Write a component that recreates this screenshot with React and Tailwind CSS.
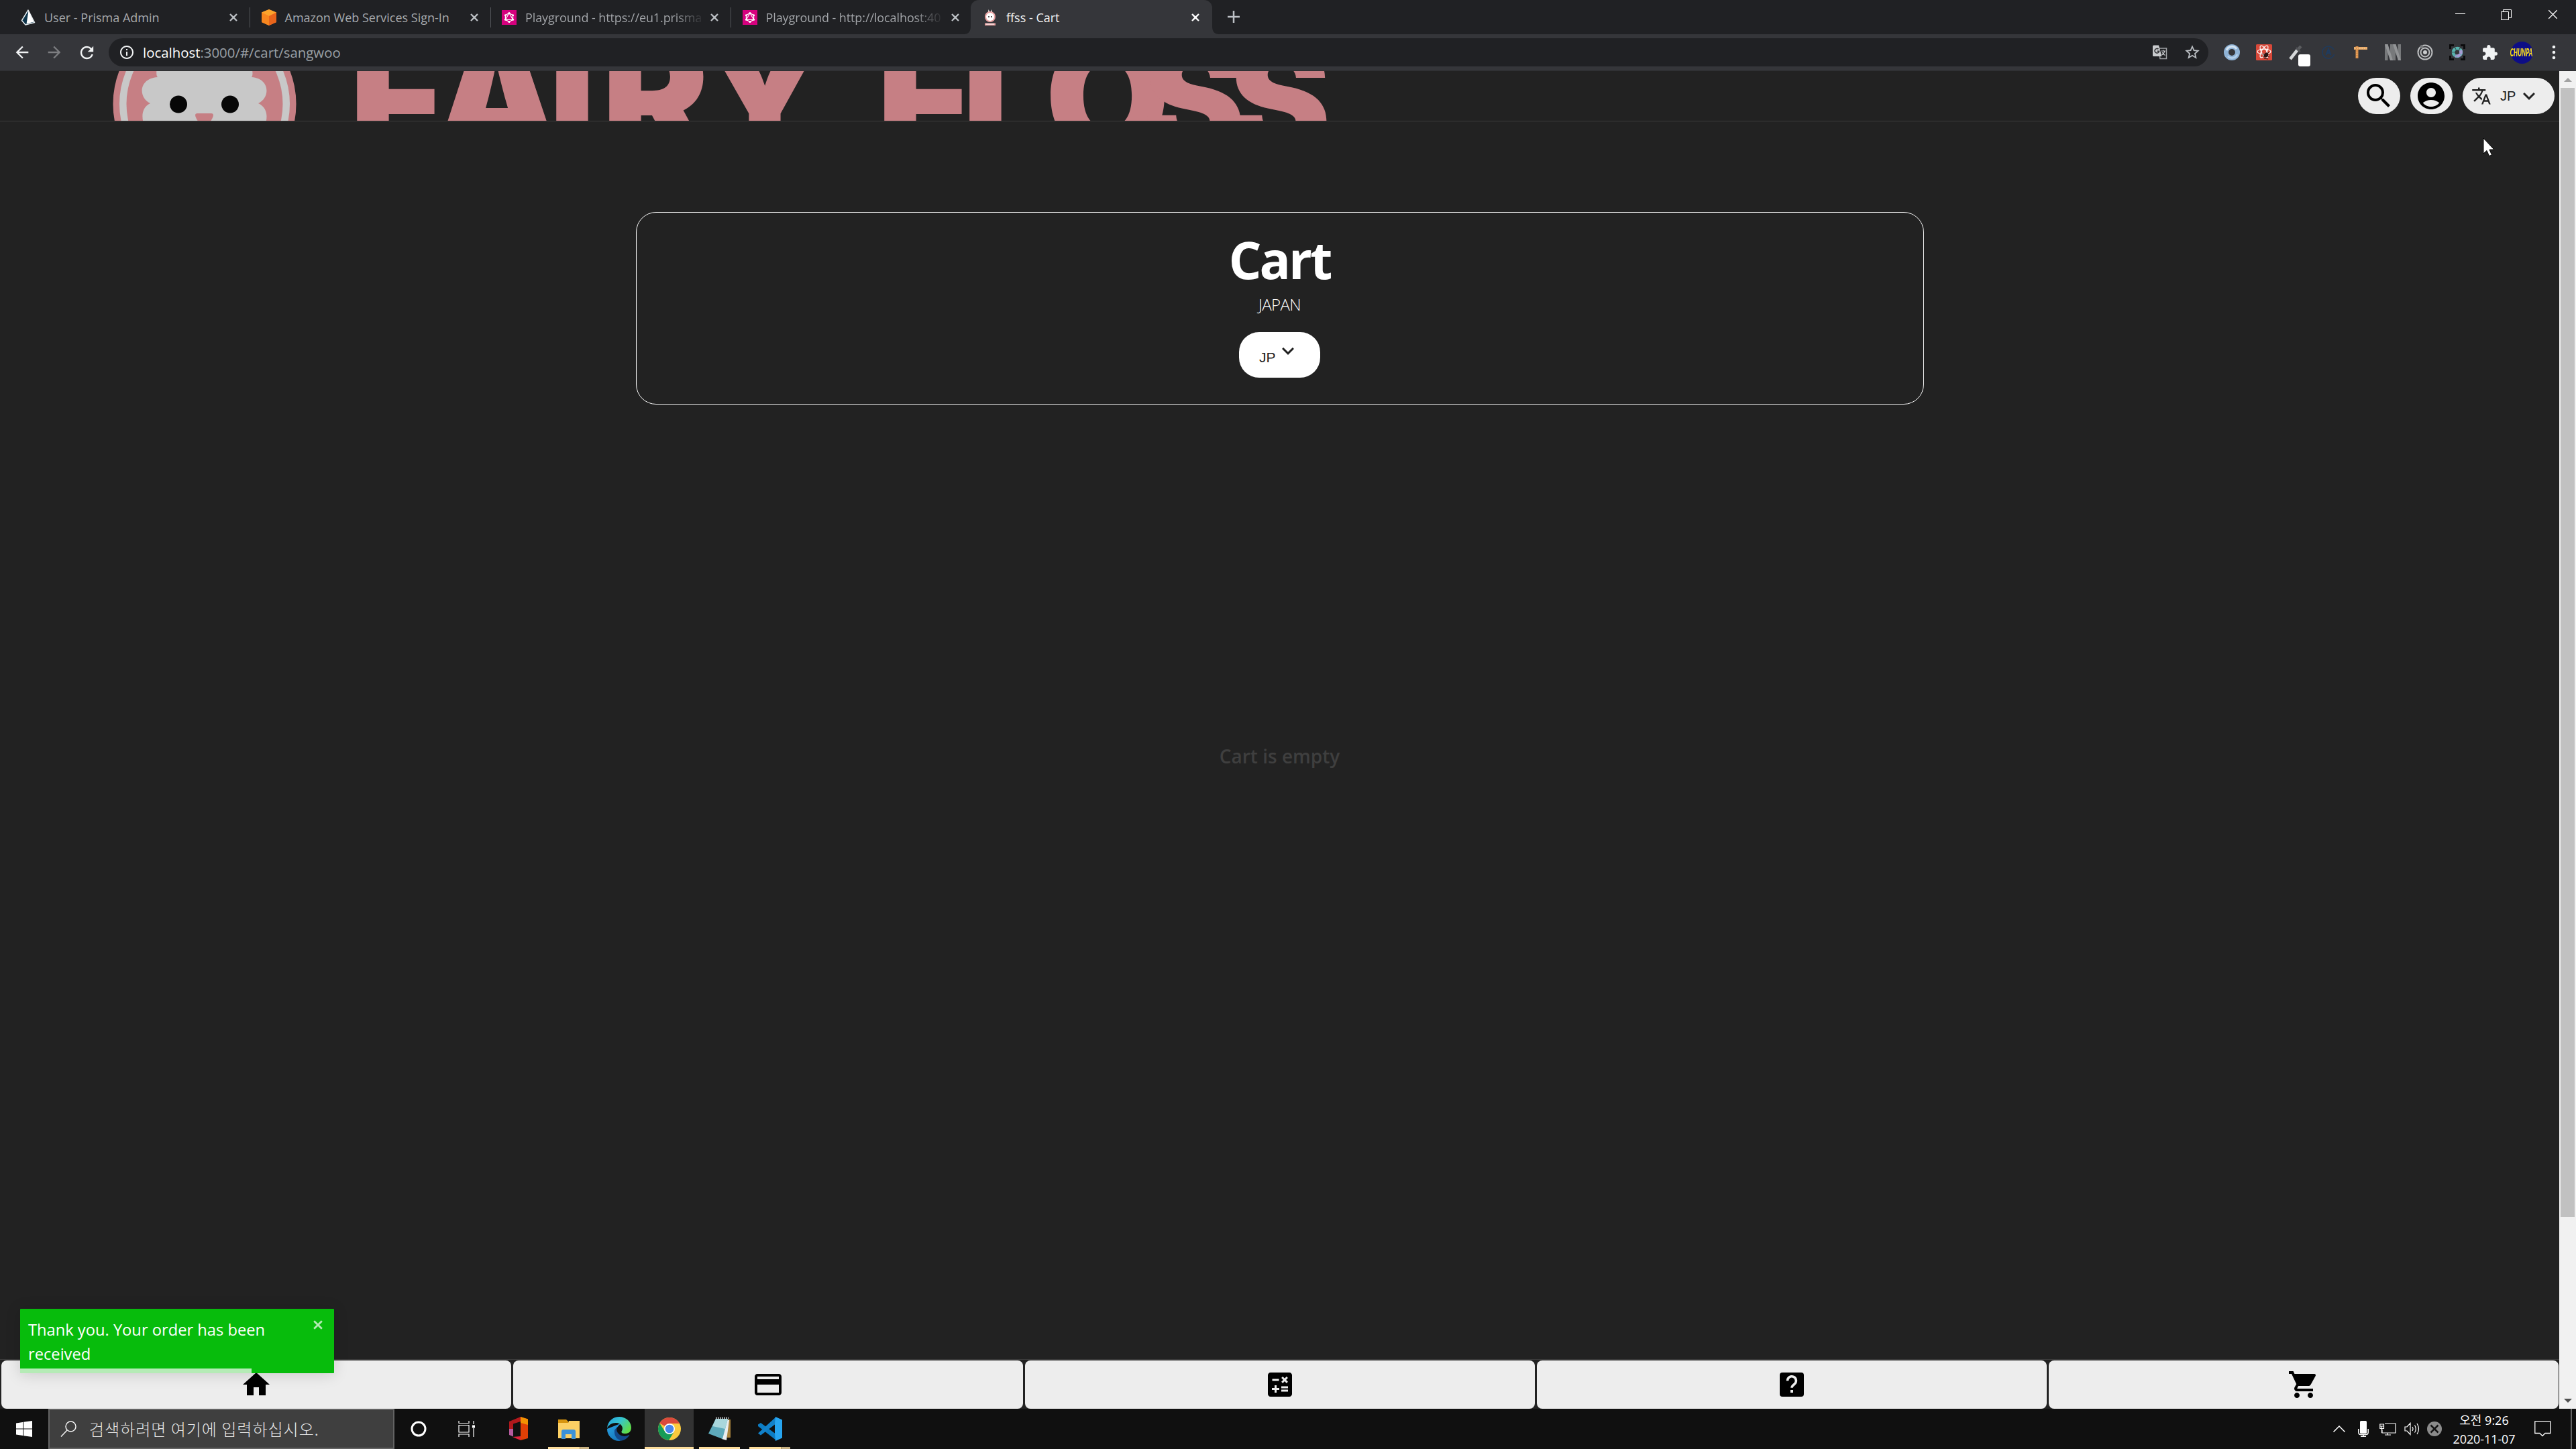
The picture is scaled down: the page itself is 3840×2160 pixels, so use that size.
import React from "react";
import {
  MdSearch, MdAccountCircle, MdTranslate, MdKeyboardArrowDown, MdHome, MdCreditCard, MdShoppingCart,
  MdArrowBack, MdArrowForward, MdRefresh, MdInfoOutline, MdStarBorder, MdExtension,
} from "react-icons/md";

const UI = "font-['Open_Sans','Noto_Sans_CJK_KR',sans-serif]";

function Close({ size = 12, className = "", w = 2.4 }) {
  return (
    <svg width={size} height={size} viewBox="0 0 12 12" className={className} stroke="currentColor" strokeWidth={w} fill="none">
      <path d="M1 1L11 11M11 1L1 11" />
    </svg>
  );
}

function PrismaIcon() {
  return (
    <svg width="22" height="24" viewBox="0 0 22 24">
      <path d="M11 1L1.500 16.500L7 23L20.500 19.500Z" fill="#0c344b" stroke="#dfe6ea" strokeWidth="1.500" strokeLinejoin="round" />
      <path d="M11.500 2L8.500 21.500L19.500 18.500Z" fill="#fff" />
    </svg>
  );
}
function AwsIcon() {
  return (
    <svg width="24" height="24" viewBox="0 0 24 24">
      <path d="M12 0L23 4.500V19L12 24L1 19V4.500Z" fill="#f58536" />
      <path d="M12 0L23 4.500L12 10L1 4.500Z" fill="#fba42c" />
      <path d="M12 10L23 4.500V19L12 24Z" fill="#e8641b" />
      <path d="M12 10L1 4.500V19L12 24Z" fill="#f7861f" />
    </svg>
  );
}
function PlaygroundIcon() {
  return (
    <svg width="22" height="22" viewBox="0 0 22 22">
      <rect width="22" height="22" fill="#d6017e" />
      <g fill="none" stroke="#fff" strokeWidth="1.200">
        <path d="M11 4.500L16.600 7.700V14.300L11 17.500L5.400 14.300V7.700Z" />
        <path d="M11 4.500L16.600 14.300H5.400Z" />
      </g>
      <g fill="#fff">
        <circle cx="11" cy="4.500" r="1.500" /><circle cx="16.600" cy="7.700" r="1.500" /><circle cx="16.600" cy="14.300" r="1.500" />
        <circle cx="11" cy="17.500" r="1.500" /><circle cx="5.400" cy="14.300" r="1.500" /><circle cx="5.400" cy="7.700" r="1.500" />
      </g>
    </svg>
  );
}
function FlossIcon() {
  return (
    <svg width="22" height="24" viewBox="0 0 22 24">
      <path d="M7.500 7L8.500 0L10.500 4L11.500 4L13.500 0L14.500 7Z" fill="#f3ece9" />
      <circle cx="11" cy="11" r="8" fill="#e9a3a3" />
      <circle cx="11" cy="11" r="6" fill="#fff" />
      <circle cx="9" cy="11" r="1" fill="#222" /><circle cx="13" cy="11" r="1" fill="#222" />
      <path d="M3 20.500H19V24H3Z" fill="#e9a3a3" /><path d="M5 21.500H17V22.500H5Z" fill="#fff" />
    </svg>
  );
}

function Tab({ icon, title, last, fade }) {
  return (
    <div className="flex h-full w-[358.500px] shrink-0 items-center">
      <div className="flex w-6 shrink-0 justify-center">{icon}</div>
      <div className="ml-[12px] w-[263px] shrink-0 text-[18px] leading-[26px] whitespace-nowrap text-[#a6a9ad]">
        {fade ? <span className="bg-linear-to-r from-[#a6a9ad] from-85% to-[#303134] bg-clip-text tracking-[-0.100px] text-transparent">{title}</span> : title}
      </div>
      <Close className="ml-[13px] shrink-0 text-[#bdc1c6]" />
      {!last && <div className="ml-[18px] h-[30px] w-px bg-[#54565a]" />}
    </div>
  );
}

function TabStrip() {
  return (
    <div className="flex h-[51px] bg-[#202124]">
      <div className="flex h-full w-[1447px] shrink-0 pl-[30px]">
        <Tab icon={<PrismaIcon />} title="User - Prisma Admin" />
        <Tab icon={<AwsIcon />} title="Amazon Web Services Sign-In" />
        <Tab icon={<PlaygroundIcon />} title="Playground - https://eu1.prisma" fade />
        <Tab icon={<PlaygroundIcon />} title="Playground - http://localhost:40" fade last />
      </div>
      <div className="relative flex h-full w-[360px] items-center rounded-t-[12px] bg-[#35363a] pl-[18px]">
        <svg className="absolute bottom-0 -left-[10px]" width="10" height="12"><path d="M10 0V12H0Q10 12 10 0Z" fill="#35363a" /></svg>
        <svg className="absolute -right-[10px] bottom-0" width="10" height="12"><path d="M0 0V12H10Q0 12 0 0Z" fill="#35363a" /></svg>
        <FlossIcon />
        <div className="ml-[13px] w-[276px] text-[18px] leading-[26px] text-[#f1f3f4]">ffss - Cart</div>
        <Close className="text-white" />
      </div>
      <svg className="mt-[16px] ml-[23px]" width="18" height="18" stroke="#bdc1c6" strokeWidth="2.500"><path d="M9 0V18M0 9H18" /></svg>
      <div className="mt-[14px] ml-auto flex items-start pr-[27px] text-white">
        <div className="mt-[6px] h-px w-[15px] bg-white" />
        <svg className="ml-[53px]" width="16" height="16" fill="none" stroke="#fff"><path d="M.5 3.500H11.500V15.500H.5ZM3.500 3.500V.5H15.500V12.500H11.500" /></svg>
        <Close size={15} w={1} className="ml-[54px]" />
      </div>
    </div>
  );
}

function Slot({ children }) {
  return <div className="relative flex h-[42px] w-12 items-center justify-center">{children}</div>;
}

function Toolbar() {
  return (
    <div className="flex h-[55px] items-center border-b border-[#2c2d30] bg-[#35363a] text-[#f1f3f4]">
      <div className="flex pl-[9px]">
        <Slot><MdArrowBack size={28} /></Slot>
        <Slot><MdArrowForward size={28} className="text-[#7d7e81]" /></Slot>
        <Slot><MdRefresh size={29} /></Slot>
      </div>
      <div className="ml-[9px] flex h-[42px] w-[3130px] items-center rounded-full bg-[#202124] pl-[15px]">
        <MdInfoOutline size={24} />
        <div className="mt-[1px] ml-[12px] grow text-[20.400px] text-[#9aa0a6]"><span className="text-white">localhost</span>:3000/#/cart/sangwoo</div>
        <Slot>
          <svg width="22" height="22" viewBox="0 0 22 22">
            <path d="M9 5H20.500V20.500H11Z" fill="none" stroke="#9fa1a4" strokeWidth="1.500" />
            <path d="M1.500 0.500H9L13.500 17H1.500Q0 17 0 15.500V2Q0 .5 1.500 .5Z" fill="#c9cbce" />
            <path d="M8.500 6.200A3.300 3.300 0 1 0 9.600 9.300H6.500" fill="none" stroke="#303134" strokeWidth="1.600" />
            <path d="M12.500 9H19M15.700 7.500V9M18 9Q16.500 13.500 13.500 15M14.200 11Q16 14 18.500 15.500" fill="none" stroke="#c9cbce" strokeWidth="1.200" />
          </svg>
        </Slot>
        <Slot><MdStarBorder size={26} className="text-[#bdc1c6]" /></Slot>
      </div>
      <div className="ml-[11px] flex">
        <Slot>
          <svg width="24" height="24" viewBox="0 0 24 24"><circle cx="12" cy="12" r="8.500" fill="none" stroke="#8fb3d6" strokeWidth="7" /><path d="M4 9A8.500 8.500 0 0 1 19 7" fill="none" stroke="#d3e3f1" strokeWidth="3" /><path d="M20 15A8.500 8.500 0 0 1 6 18" fill="none" stroke="#b4d0ea" strokeWidth="2.500" /></svg>
        </Slot>
        <Slot>
          <svg width="24" height="24" viewBox="0 0 24 24"><rect width="24" height="24" rx="1.500" fill="#d8493a" />
            <g fill="none" stroke="#fff" strokeWidth="1.200"><ellipse cx="12" cy="11" rx="10" ry="3.800" /><ellipse cx="12" cy="11" rx="10" ry="3.800" transform="rotate(60 12 11)" /><ellipse cx="12" cy="11" rx="10" ry="3.800" transform="rotate(120 12 11)" /></g>
            <ellipse cx="15" cy="16" rx="3" ry="4" fill="#2b1512" transform="rotate(35 15 16)" /><path d="M9 14L20 19M10 19L19 12M12 21L18 22" stroke="#2b1512" /></svg>
        </Slot>
        <Slot>
          <svg width="24" height="24" viewBox="0 0 24 24"><path d="M3 22L14 8" stroke="#d6d8da" strokeWidth="4.500" /><path d="M13 9L19 3" stroke="#5b5d60" strokeWidth="4.500" /><path d="M12 5L18 11" stroke="#505255" strokeWidth="2" /></svg>
          <div className="absolute top-[24px] left-[27px] size-[18px] rounded-[3px] bg-white" />
        </Slot>
        <Slot>
          <svg width="20" height="20" viewBox="0 0 20 20" fill="none" stroke="#1f3b5e"><path d="M18 6A9 9 0 1 0 18.500 13" strokeWidth="1.500" /><path d="M6.500 14L10 5.500L13.500 14M8 11H12" strokeWidth="2.200" /></svg>
        </Slot>
        <Slot>
          <svg width="22" height="22" viewBox="0 0 22 22"><path d="M1 5H21" stroke="#e9ab68" strokeWidth="4" /><path d="M5.500 2V20" stroke="#d98c45" strokeWidth="4" /><path d="M2 5H20M5.500 3V19" stroke="#fbe0b4" strokeDasharray="1.500 2" /></svg>
        </Slot>
        <Slot>
          <svg width="24" height="24" viewBox="0 0 24 24"><path d="M0 0H4.500V24H0ZM8 0H12V24H8ZM12 0H16V24H12ZM19.500 0H24V24H19.500Z" fill="#77797b" /><path d="M0 0H4.500L12 24H8ZM12 0H16.500L24 24H20Z" fill="#929496" /></svg>
        </Slot>
        <Slot>
          <svg width="24" height="24" viewBox="0 0 24 24" fill="none" stroke="#bcbec0"><circle cx="12" cy="12" r="10.500" strokeWidth="2" /><circle cx="12" cy="12" r="6.500" strokeWidth="2" /><circle cx="12" cy="12" r="3" fill="#c9cbcd" stroke="none" /><circle cx="7" cy="3.500" r="2.500" fill="#77797b" stroke="none" /></svg>
        </Slot>
        <Slot>
          <svg width="24" height="24" viewBox="0 0 24 24" fill="none"><path d="M1.500 7V1.500H7M17 1.500H22.500V7M22.500 17V22.500H17M7 22.500H1.500V17" stroke="#0b0b0c" strokeWidth="3" /><circle cx="12" cy="12" r="6" stroke="#57b3ae" strokeWidth="4.500" strokeDasharray="5.500 .8" /><path d="M17 9A6 6 0 0 1 9 17" stroke="#a79bd4" strokeWidth="4.500" strokeDasharray="5.500 .8" /></svg>
        </Slot>
        <Slot><MdExtension size={25} /></Slot>
        <Slot>
          <div className="flex size-[33px] items-center justify-center rounded-full bg-[#0d0d86] font-['Lato',sans-serif] text-[17px] font-black text-[#ffe21a] italic">
            <span className="scale-x-[0.500]">CHUNPA</span>
          </div>
        </Slot>
        <Slot>
          <svg width="6" height="22" fill="#f1f3f4"><circle cx="3" cy="3" r="2.300" /><circle cx="3" cy="11" r="2.300" /><circle cx="3" cy="19" r="2.300" /></svg>
        </Slot>
      </div>
    </div>
  );
}

function Logo() {
  return (
    <svg width="2040" height="74" viewBox="0 106 2040 74" className="shrink-0">
      <circle cx="305" cy="155" r="136.500" fill="#c67f84" />
      <circle cx="305" cy="155" r="127" fill="#c8c8c8" />
      <circle cx="305" cy="155" r="116.500" fill="#c67f84" />
      <path d="M234 100Q232 112 235 115C206 117 206 146 224 154C208 162 212 180 216 190H394C398 180 402 162 385 154C403 146 403 117 375 115Q378 112 375 100Z" fill="#c8c8c8" />
      <circle cx="266" cy="155.500" r="13" fill="#070707" />
      <circle cx="343" cy="155.500" r="13" fill="#070707" />
      <path d="M294 169H315Q319 169 317.500 174Q315 181 310 184H299Q294 181 291.500 174Q290 169 294 169Z" fill="#c67f84" />
      <g fill="#c67f84" className="font-['Inter',sans-serif] font-black" fontSize="240">
        <text x="521 646 818 897 1046" y="230">FAIRY</text>
        <text x="1307 1434 1558 1704 1832" y="230">FLO<tspan fontSize="228">SS</tspan></text>
      </g>
    </svg>
  );
}

function Header() {
  return (
    <div className="flex h-[75px] items-center justify-between border-b border-[#3d3d3d]">
      <Logo />
      <div className="flex gap-[15px] pr-[7px] text-black">
        <div className="flex h-[54px] w-[63px] items-center justify-center rounded-[27px] bg-[#ededed] pr-px"><MdSearch size={48} /></div>
        <div className="flex h-[54px] w-[63px] items-center justify-center rounded-[27px] bg-[#ededed] pr-px"><MdAccountCircle size={48} /></div>
        <div className="flex h-[54px] w-[137px] items-center rounded-[27px] bg-[#ededed] pl-[13px] text-[#222]">
          <MdTranslate size={30} />
          <span className="ml-[13px] font-['Liberation_Sans',sans-serif] text-[20px]">JP</span>
          <MdKeyboardArrowDown size={36} className="ml-[2px]" />
        </div>
      </div>
    </div>
  );
}

function CartCard() {
  return (
    <div className="mx-auto mt-[135px] flex h-[287px] w-[1920px] flex-col items-center rounded-[30px] border border-[#fbfbfb] text-white">
      <h1 className="mt-[15px] text-[77px] leading-[110px] font-bold tracking-[-3px]">Cart</h1>
      <div className="mt-[-4px] text-[24px] leading-[32px] font-light tracking-[-0.600px]">JAPAN</div>
      <div className="mt-[25px] flex h-[68px] w-[121px] rounded-[30px] bg-white pl-[30px] text-[#222]">
        <span className="mt-[22px] font-['Liberation_Sans',sans-serif] text-[21px]">JP</span>
        <MdKeyboardArrowDown size={36} className="mt-[10px]" />
      </div>
    </div>
  );
}

function Toast() {
  return (
    <div className="absolute bottom-[53px] left-[30px] h-[96px] w-[468px] rounded-[1px] bg-[#07bc0c] shadow-[0_2px_22px_0_rgba(0,0,0,0.150)]">
      <div className="flex justify-between pt-[13px] pr-[17px] pl-[12px] text-white">
        <div className="w-[380px] text-[23.700px] leading-[36px] whitespace-nowrap">Thank you. Your order has been<br />received</div>
        <Close size={14} w={2.4} className="mt-[4px] opacity-70" />
      </div>
      <div className="absolute bottom-0 left-0 h-[7px] w-[345px] bg-[#b5ebb6]" />
    </div>
  );
}

function CalcIcon() {
  return (
    <svg width="48" height="48" viewBox="0 0 24 24">
      <path d="M19 3H5c-1.100 0-2 .9-2 2v14c0 1.100.9 2 2 2h14c1.100 0 2-.9 2-2V5c0-1.100-.9-2-2-2zm-5.970 4.060L14.090 6l1.410 1.410L16.910 6l1.060 1.060-1.410 1.410 1.410 1.410-1.060 1.060-1.410-1.400-1.410 1.410-1.060-1.060 1.410-1.410-1.410-1.420zM6.250 7.720h5v1.500h-5v-1.500zM11.500 16h-2v2H8v-2H6v-1.500h2v-2h1.500v2h2V16zm6.500 1.250h-5v-1.500h5v1.500zm0-2.500h-5v-1.500h5v1.500z" />
    </svg>
  );
}
function HelpIcon() {
  return (
    <svg width="48" height="48" viewBox="0 0 24 24">
      <rect x="3" y="3" width="18" height="18" rx="2" />
      <path d="M8.800 9.200A3.200 3.200 0 1 1 14 11.600C12.700 12.500 12 13 12 14.400" fill="none" stroke="#ededed" strokeWidth="1.800" />
      <rect x="11" y="16" width="2" height="2" fill="#ededed" />
    </svg>
  );
}

function NavBar() {
  return (
    <div className="grid h-[74px] grid-cols-5 gap-[3px] border-t border-[#3d3d3d] pt-[1px] pr-[1px] pl-[2px] text-black">
      {[<MdHome size={48} />, <MdCreditCard size={48} />, <CalcIcon />, <HelpIcon />, <MdShoppingCart size={48} />].map((icon, i) => (
        <div key={i} className="flex h-[72px] items-center justify-center rounded-[8px] bg-[#ededed] pr-px">{icon}</div>
      ))}
    </div>
  );
}

function ScrollBar() {
  return (
    <div className="flex w-[25px] flex-col items-center bg-[#f1f1f1]">
      <div className="flex h-[25px] items-center"><svg width="12" height="6"><path d="M0 6L6 0L12 6Z" fill="#a3a3a3" /></svg></div>
      <div className="h-[1683px] w-[21px] bg-[#c1c1c1]" />
      <div className="mt-auto flex h-[25px] items-center"><svg width="12" height="6"><path d="M0 0L6 6L12 0Z" fill="#505050" /></svg></div>
    </div>
  );
}

function TaskItem({ children, line, stacked, active }) {
  return (
    <div className={active ? "relative mx-px flex h-[60px] w-[73px] items-center justify-center bg-[#333]" : "relative flex h-[60px] w-[75px] items-center justify-center"}>
      {children}
      {line && (
        <div className={active ? "absolute inset-x-0 bottom-0 flex h-[3px]" : "absolute inset-x-[7px] bottom-0 flex h-[3px]"}>
          <div className="grow bg-[#fcdd9c]" />
          {stacked && <div className="w-[14px] border-l border-[#a08b60] bg-[#c9b283]" />}
        </div>
      )}
    </div>
  );
}

function TaskBar() {
  return (
    <div className="flex h-[60px] items-center bg-[#101010] text-white">
      <div className="flex w-[72px] justify-center">
        <svg width="24" height="24" viewBox="0 0 24 24" fill="#fff"><path d="M0 3.500L10 2V11.500H0ZM11 1.800L24 0V11.500H11ZM0 12.500H10V22L0 20.500ZM11 12.500H24V24L11 22.200Z" /></svg>
      </div>
      <div className="flex h-[60px] w-[516px] items-center border-2 border-[#636363] bg-[#3f3f3f] pl-[16px]">
        <svg width="24" height="24" fill="none" stroke="#f3f3f3" strokeWidth="1.500"><circle cx="15.500" cy="8.500" r="7.500" /><path d="M10 14L1 23.500" /></svg>
        <span className="ml-[19px] font-['Noto_Sans_CJK_KR',sans-serif] text-[24px] leading-[36px] font-light tracking-[1px] whitespace-nowrap text-[#e6e6e6]">검색하려면 여기에 입력하십시오.</span>
      </div>
      <div className="flex w-[72px] justify-center"><svg width="24" height="24" fill="none" stroke="#fff" strokeWidth="3"><circle cx="12" cy="12" r="10" /></svg></div>
      <div className="flex w-[70px] justify-center">
        <svg width="25" height="24" fill="none" stroke="#fff" strokeWidth="1.200"><path d="M1 0V3.500H16V0M1 6.500H16V17H1ZM1 24V20H16V24M23 0V5M23 11V24" /><path d="M21.500 7H24.500V10H21.500Z" fill="#fff" /></svg>
      </div>
      <div className="ml-[5px] flex">
        <TaskItem>
          <svg width="28" height="36" viewBox="0 0 28 36">
            <path d="M17 0L0 7V27L6 24V10.500L17 7Z" fill="#b0181c" /><path d="M0 18V27L6 29.500V18Z" fill="#b55a9e" />
            <path d="M17 0L28 3.500V32L17 35Z" fill="#e04006" /><path d="M17 0L28 3.500V12L17 9Z" fill="#f19102" /><path d="M5 30L17 29V35Z" fill="#e0223c" />
          </svg>
        </TaskItem>
        <TaskItem line stacked>
          <svg width="32" height="31" viewBox="0 0 32 31"><path d="M0 1H12L15 4V8H0Z" fill="#d8950f" /><path d="M0 6H15L16 3H32V29H0Z" fill="#fdd064" /><path d="M5 30V19Q5 16 8 16H23Q26 16 26 19V30H20V23H11V30Z" fill="#3c92d8" /></svg>
        </TaskItem>
        <TaskItem>
          <svg width="36" height="36" viewBox="0 0 36 36">
            <defs>
              <linearGradient id="edgeTop" x1="0" y1="0" x2="1" y2=".6"><stop offset="0" stopColor="#239fe0" /><stop offset=".5" stopColor="#36c4d0" /><stop offset="1" stopColor="#5fdc4a" /></linearGradient>
              <linearGradient id="edgeSide" x1="0" y1="0" x2="1" y2="1"><stop offset="0" stopColor="#2aa6e6" /><stop offset="1" stopColor="#0f63ac" /></linearGradient>
            </defs>
            <path d="M0 18A18 18 0 0 0 18 36Q28 35 33 27Q27 31 20 29Q12 25 14 17L20 10Z" fill="url(#edgeSide)" />
            <path d="M11 20Q10 33 22 35.500Q29 34 33.500 27Q22 32 16 24Q13 20 15 15Z" fill="#134a8c" />
            <path d="M0 17C1 6 9 0 18 0C29 0 36 8 36 16C36 23 31 25 27 25C23 25 20 23.500 22 21C25 16 21 9 13 9Q4 9 0 17Z" fill="url(#edgeTop)" />
          </svg>
        </TaskItem>
        <TaskItem active line>
          <svg width="34" height="34" viewBox="0 0 34 34">
            <circle cx="17" cy="17" r="17" fill="#fbca3e" />
            <path d="M17 17L2.280 8.500A17 17 0 0 1 31.700 8.500L31.900 9H17Z" fill="#db4a3c" />
            <path d="M2.280 8.500A17 17 0 0 0 16 34L24 21L17 17L9.500 20Z" fill="#179c57" />
            <circle cx="17" cy="17" r="8" fill="#fff" /><circle cx="17" cy="17" r="6.300" fill="#4a86ec" />
          </svg>
        </TaskItem>
        <TaskItem line>
          <svg width="34" height="36" viewBox="0 0 34 36"><path d="M28 4H33V31H28Z" fill="#a8823c" /><path d="M11 3L31 5L27 35L20 33Z" fill="#e9edef" /><path d="M11 3H29L21 33L0 25Z" fill="#5eaabb" /><path d="M11 3H29L25 18L6 14Z" fill="#a9d7dc" /><path d="M11 2H30" stroke="#c9cccd" strokeWidth="3" strokeDasharray="1.500 1.500" /></svg>
        </TaskItem>
        <TaskItem line stacked>
          <svg width="36" height="36" viewBox="0 0 36 36"><path d="M0 11.500L4 9L27 26V35L0 14Z" fill="#0c7dc4" /><path d="M0 24.500L27 0V10L4 27.500Z" fill="#1281c9" /><path d="M26 0L36 4.500V31.500L26 36L25 26V10Z" fill="#27a5f0" /></svg>
        </TaskItem>
      </div>
      <div className="ml-auto flex h-full items-center">
        <svg width="18" height="10" fill="none" stroke="#fff" strokeWidth="1.500"><path d="M.5 9.500L9 1L17.500 9.500" /></svg>
        <svg className="ml-[19px]" width="16" height="24" fill="none" stroke="#fff" strokeWidth="1.500"><rect x="3" y="0" width="10" height="19" rx="1.500" fill="#fff" stroke="none" /><path d="M.8 12V17Q.8 20.500 4 20.500H12Q15.200 20.500 15.200 17V12M8 20V23M4 23.200H12" /></svg>
        <svg className="ml-[16px]" width="25" height="19" fill="none" stroke="#fff" strokeWidth="1.200"><path d="M8 1H24V15H4V10M12 15V18M8 18H17M.8 2H6.500V8.500H.8ZM1 5H6M3.500 5V15" /></svg>
        <svg className="ml-[12px]" width="23" height="20" fill="none" stroke="#fff" strokeWidth="1.200"><path d="M1 7H4L9 1.500V18.500L4 13H1ZM12 7Q14 10 12 13M15.500 4.500Q19 10 15.500 15.500M19 2Q24 10 19 18" /></svg>
        <svg className="ml-[11px]" width="22" height="22"><circle cx="11" cy="11" r="11" fill="#8b8b8b" /><path d="M5.500 5.500L16.500 16.500M16.500 5.500L5.500 16.500" stroke="#151515" strokeWidth="2.500" /></svg>
        <div className="ml-[12px] flex w-[102px] flex-col items-center pt-[1px] text-[18px] leading-[28px] whitespace-nowrap">
          <span>오전 9:26</span>
          <span className="tracking-[-0.100px]">2020-11-07</span>
        </div>
        <svg className="ml-[24px]" width="25" height="24" fill="none" stroke="#fff" strokeWidth="1.300"><path d="M.8 .8H23.800V18.500H16L12 22.500L8 18.500H.8Z" /></svg>
        <div className="mr-[6px] ml-[29px] h-full w-[2px] bg-[#666]" />
      </div>
    </div>
  );
}

export default function App() {
  return (
    <div className={`${UI} relative flex h-[2160px] w-[3840px] flex-col overflow-hidden bg-[#222]`}>
      <TabStrip />
      <Toolbar />
      <div className="flex h-[1994px]">
        <div className="relative flex w-[3815px] flex-col">
          <Header />
          <CartCard />
          <div className="mt-[504px] text-center text-[28px] leading-[40px] font-semibold text-[#3f3f3f]">Cart is empty</div>
          <div className="mt-auto"><NavBar /></div>
          <Toast />
        </div>
        <ScrollBar />
      </div>
      <TaskBar />
      <svg className="absolute top-[205px] left-[3701px]" width="19" height="29" viewBox="0 0 19 29"><path d="M1 1V24L6 19.500L9.500 27.500L13.500 26L10 18H17Z" fill="#fff" stroke="#000" /></svg>
    </div>
  );
}
